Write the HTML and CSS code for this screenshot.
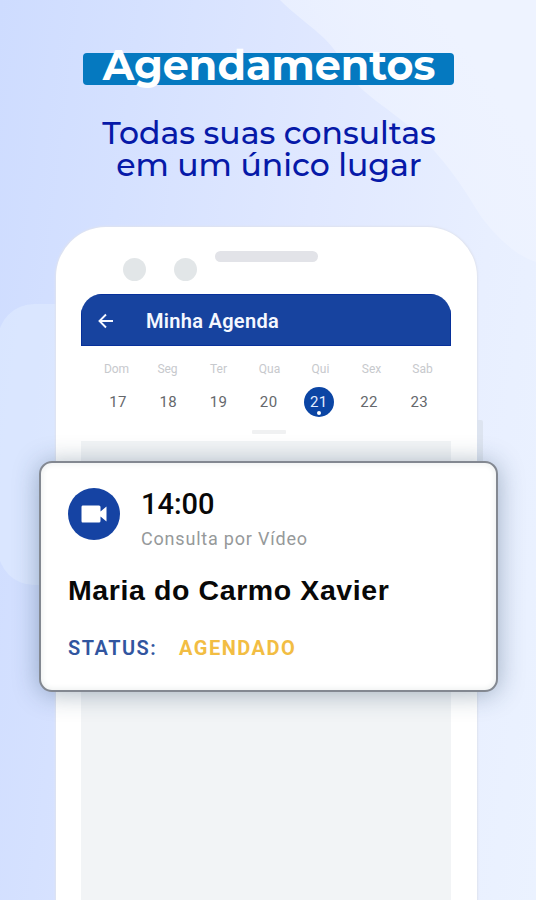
FILE: index.html
```html
<!DOCTYPE html>
<html lang="pt-BR">
<head>
<meta charset="utf-8">
<title>Minha Agenda</title>
<link rel="stylesheet" href="styles.css">
</head>
<body>
<main class="promo">
  <svg class="backdrop" viewBox="0 0 536 900" aria-hidden="true">
    <defs>
      <linearGradient id="glow" gradientUnits="userSpaceOnUse" x1="350" y1="120" x2="460" y2="40">
        <stop offset="0" stop-color="#eef3ff" stop-opacity=".65"/>
        <stop offset="1" stop-color="#eef3ff"/>
      </linearGradient>
    </defs>
    <path d="M280 0C300 20 324 34 336 52C352 88 374 98 396 116C428 140 452 168 480 215C498 240 518 256 536 262V0Z" fill="url(#glow)"/>
    <rect x="-2" y="304" width="180" height="281" rx="36" fill="#e5f0ff" opacity=".45"/>
  </svg>
  <header class="headline">
    <h1 class="title">Agendamentos</h1>
    <p class="subtitle">Todas suas consultas<br>em um único lugar</p>
  </header>
  <section class="phone">
    <i class="side-button"></i>
    <div class="sensors">
      <i class="camera"></i><i class="camera"></i><i class="speaker"></i>
    </div>
    <div class="screen">
      <div class="appbar">
        <svg class="back" viewBox="0 0 16 16"><path d="M15 8H2M8 1.5 1.5 8 8 14.5"/></svg>
        <h2 class="appbar-title">Minha Agenda</h2>
      </div>
      <div class="week">
        <div class="names"><span>Dom</span><span>Seg</span><span>Ter</span><span>Qua</span><span>Qui</span><span>Sex</span><span>Sab</span></div>
        <div class="days"><span>17</span><span>18</span><span>19</span><span>20</span><span class="today">21</span><span>22</span><span>23</span></div>
        <i class="handle"></i>
      </div>
      <div class="content"></div>
    </div>
  </section>
  <article class="card">
    <div class="visit">
      <div class="video"><svg viewBox="0 0 26 18"><path d="M1.5 .5H18Q19.5 .5 19.5 2V6.5L25.5 1.5V16.5L19.5 11.5V16Q19.5 17.5 18 17.5H1.5Q.5 17.5 .5 16V2Q.5 .5 1.5 .5Z"/></svg></div>
      <div class="details"><span class="time">14:00</span><span class="kind">Consulta por Vídeo</span></div>
    </div>
    <h3 class="patient">Maria do Carmo Xavier</h3>
    <div class="status"><span class="label">STATUS:</span><span class="value">AGENDADO</span></div>
  </article>
</main>
</body>
</html>
```
FILE: styles.css
```css
* { box-sizing: border-box; margin: 0; padding: 0; }

.promo {
  position: relative;
  height: 900px;
  overflow: hidden;
  background: linear-gradient(97deg, #cedcff 0%, #d5e1ff 22%, #e0e8ff 52%, #e8efff 80%, #ebf2ff 100%);
  font-family: Roboto, sans-serif;
}
.backdrop { position: absolute; inset: 0; width: 536px; height: 900px; }

.headline {
  position: relative;
  height: 227px;
  padding-top: 53px;
  font-family: Montserrat, Inter, sans-serif;
  text-align: center;
}
.title {
  width: 371px;
  height: 32px;
  margin-left: 83px;
  padding-left: 1px;
  border-radius: 4px;
  background: #0579c0;
  color: #fff;
  font-size: 41.2px;
  font-weight: 700;
  line-height: 25px;
  white-space: nowrap;
}
.subtitle {
  margin-top: 32px;
  padding-left: 2px;
  color: #0619a8;
  font-size: 31.5px;
  font-weight: 500;
  line-height: 32px;
}

.phone {
  position: relative;
  width: 421px;
  height: 740px;
  margin-left: 56px;
  padding: 0 26px 0 25px;
  border-radius: 50px 50px 0 0;
  background: #fff;
  box-shadow: 0 0 2px 1px #dfe3ef;
}
.side-button { position: absolute; top: 193px; left: 421px; width: 6px; height: 90px; border-radius: 0 2px 2px 0; background: #dde4f0; }
.sensors { display: flex; height: 67px; padding-left: 42px; }
.camera { width: 23px; height: 23px; margin: 31px 28px 0 0; border-radius: 50%; background: #e2e6e8; }
.speaker { width: 103px; height: 11px; margin: 24px 0 0 -10px; border-radius: 6px; background: #e2e3e8; }

.screen { border-radius: 21px 21px 0 0; overflow: hidden; }
.appbar {
  display: flex;
  align-items: center;
  height: 52px;
  padding: 3px 17px 0;
  background: #17439f;
  box-shadow: inset 0 0 0 1px #07309a;
  color: #f5f8ff;
}
.back { width: 16px; height: 16px; margin: -2px 32px 0 0; fill: none; stroke: #f5f8ff; stroke-width: 1.9; }
.appbar-title { font-size: 20px; font-weight: 600; letter-spacing: .3px; line-height: 25px; }
.week { height: 95px; padding: 15px 10px 0; text-align: center; }
.names, .days { display: grid; grid-template-columns: repeat(7, 51px); }
.names { color: #c7c9cd; font-size: 12px; line-height: 16px; }
.days {
  grid-template-columns: repeat(7, 50.2px);
  margin: 9px 0 0 2px;
  color: #65686c;
  font-size: 15px;
  letter-spacing: .4px;
  line-height: 33px;
}
.today { position: relative; width: 30px; height: 30px; margin: 1px auto; border-radius: 50%; background: #0b45a4; color: #e3edff; line-height: 31px; }
.today::after { content: ""; position: absolute; left: 13px; bottom: 2px; width: 4px; height: 4px; border-radius: 50%; background: #fff; }
.handle { display: block; width: 34px; height: 4px; margin: 11px auto 0 161px; border-radius: 1px; background: #f0f1f2; }
.content { height: 500px; background: #f2f4f6; }

.card {
  position: absolute;
  top: 461px;
  left: 39px;
  width: 459px;
  height: 231px;
  padding: 25px 27px;
  border: 2px solid #838891;
  border-radius: 13px;
  background: #fff;
  box-shadow: inset 0 0 5px 2px #f1f3f3, 0 2px 26px rgba(35, 65, 95, .38);
}
.visit { display: flex; gap: 21px; height: 64px; }
.video { display: grid; place-items: center; width: 52px; height: 52px; border-radius: 50%; background: #1543a3; }
.video svg { width: 26px; height: 18px; fill: #fff; }
.details { display: flex; flex-direction: column; }
.time { color: #080808; font-size: 29px; font-weight: 500; line-height: 32px; }
.kind { margin-top: 7px; color: #96999a; font-size: 18px; letter-spacing: .8px; line-height: 24px; white-space: nowrap; }
.patient { margin-top: 20px; color: #080808; font-family: "Liberation Sans", sans-serif; font-size: 28.5px; font-weight: 700; letter-spacing: .6px; line-height: 36px; white-space: nowrap; }
.status { display: flex; margin-top: 26px; font-size: 20px; line-height: 28px; }
.label { width: 111px; color: #31559f; font-weight: 600; letter-spacing: 1.5px; }
.value { color: #f2bd43; font-weight: 700; letter-spacing: 1.5px; }
```
